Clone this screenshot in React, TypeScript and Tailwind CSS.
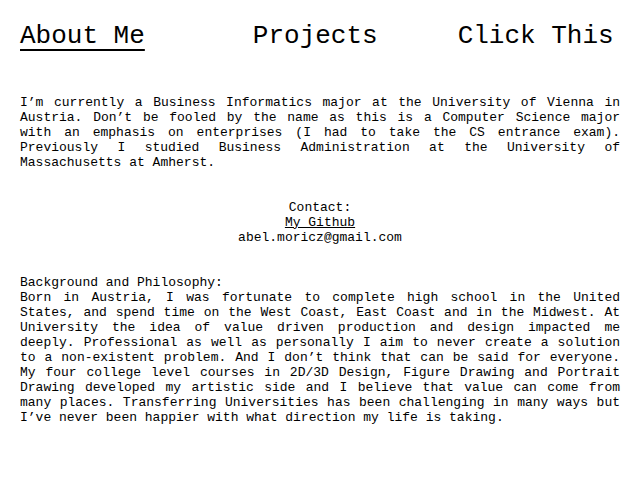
export default function App() {
  return (
    <div className="min-h-screen bg-white px-5 text-black font-['Liberation_Mono',monospace]">
      <nav className="flex pt-[22px] text-[26px] leading-[29.5px]">
        <a href="#" className="underline decoration-[1.5px] underline-offset-[6px]">
          About Me
        </a>
        <a href="#" className="ml-[108px]">
          Projects
        </a>
        <a href="#" className="ml-[80px]">
          Click This
        </a>
      </nav>

      <main className="mt-[43px] text-[13px] leading-[15px]">
        <p className="text-justify">
          I’m currently a Business Informatics major at the University of Vienna in Austria. Don’t be
          fooled by the name as this is a Computer Science major with an emphasis on enterprises (I had
          to take the CS entrance exam). Previously I studied Business Administration at the University
          of Massachusetts at Amherst.
        </p>

        <div className="mt-[30px] text-center">
          <p>Contact:</p>
          <a href="#" className="underline">
            My Github
          </a>
          <p>abel.moricz@gmail.com</p>
        </div>

        <div className="mt-[30px] text-justify">
          <p>Background and Philosophy:</p>
          <p>
            Born in Austria, I was fortunate to complete high school in the United States, and spend
            time on the West Coast, East Coast and in the Midwest. At University the idea of value
            driven production and design impacted me deeply. Professional as well as personally I aim to
            never create a solution to a non-existent problem. And I don’t think that can be said for
            everyone. My four college level courses in 2D/3D Design, Figure Drawing and Portrait Drawing
            developed my artistic side and I believe that value can come from many places. Transferring
            Universities has been challenging in many ways but I’ve never been happier with what
            direction my life is taking.
          </p>
        </div>
      </main>
    </div>
  );
}
